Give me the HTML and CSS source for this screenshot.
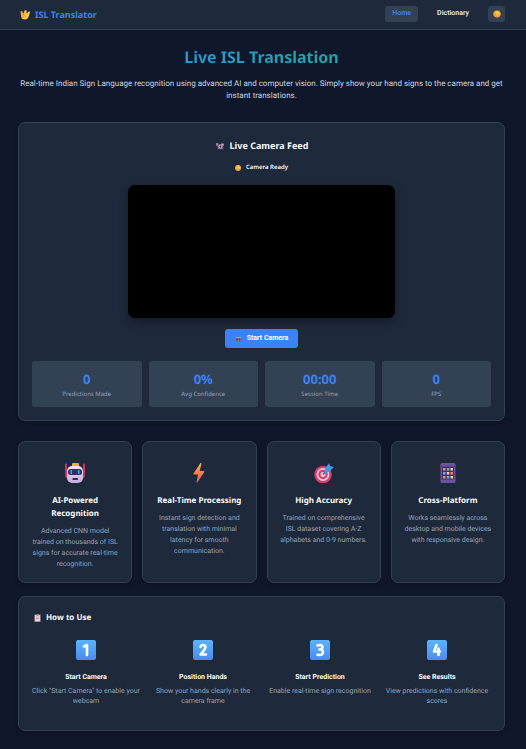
FILE: index.html
```html
<!DOCTYPE html>
<html lang="en">
<head>
<meta charset="utf-8">
<title>ISL Translator</title>
<meta name="viewport" content="width=device-width, initial-scale=1">
<link rel="stylesheet" href="styles.css">
</head>
<body>
<svg width="0" height="0" class="defs" aria-hidden="true">
  <defs>
    <linearGradient id="bolt" x1="0" y1="0" x2="0" y2="1"><stop offset="0" stop-color="#ffb13d"/><stop offset="1" stop-color="#f4505e"/></linearGradient>
    <linearGradient id="key" x1="0" y1="0" x2="0" y2="1"><stop offset="0" stop-color="#5cb3fd"/><stop offset="1" stop-color="#4a8cf0"/></linearGradient>
    <linearGradient id="face" x1="0" y1="0" x2="0" y2="1"><stop offset="0" stop-color="#eee6f5"/><stop offset="1" stop-color="#c3aedb"/></linearGradient>
    <radialGradient id="sun" cx=".6" cy=".35" r=".7"><stop offset="0" stop-color="#ffd34f"/><stop offset="1" stop-color="#e9912c"/></radialGradient>
    <linearGradient id="hand" x1="0" y1="0" x2="1" y2="0"><stop offset="0" stop-color="#f79a35"/><stop offset=".6" stop-color="#ffcb45"/></linearGradient>
  </defs>
</svg>
<header class="topbar">
  <a class="brand" href="#">
    <svg class="brand-icon" viewBox="0 0 20 20" aria-hidden="true"><path fill="url(#hand)" d="M1 4q1-3 4-1l1 4 2-1 1-5q2-2 4 0v5l1 1 3-4q2-1 3 1l-2 7q-2 8-8 8-8 0-8-7z"/><path d="M4 9q5 0 7 3" fill="none" stroke="#d97a25"/></svg>
    ISL Translator
  </a>
  <nav class="nav">
    <a class="nav-link active" href="#">Home</a>
    <a class="nav-link" href="#">Dictionary</a>
    <button class="theme" type="button" aria-label="Toggle theme"><svg viewBox="0 0 20 20" aria-hidden="true"><path fill="#dc8730" d="m10 0 2.500 2.500L16 1.500l1 3.500 3 2-1 3 1 3-3 2-1 3.500-3.500-1L10 20l-2.500-2.500-3.500 1L3 15l-3-2 1-3-1-3 3-2 1-3.500 3.500 1z"/><circle cx="10" cy="10" r="8" fill="url(#sun)"/></svg></button>
  </nav>
</header>
<main class="page">
  <section class="hero">
    <h1>Live ISL Translation</h1>
    <p>Real-time Indian Sign Language recognition using advanced AI and computer vision. Simply show your hand signs to the camera and get instant translations.</p>
  </section>

  <section class="panel camera">
    <h2><svg class="camera-icon" viewBox="0 0 20 20" aria-hidden="true"><path fill="#7d6b85" d="M0 3h6v3h7V3h7v6l-2 1v8H4v-7L0 9z"/><circle cx="11" cy="11" r="5" fill="#b6a3b9"/><circle cx="11" cy="11" r="2.500" fill="#4a4054"/><path fill="#c2b1c4" d="M14 5h5v3h-5zM1 4h4v2H1z"/></svg>Live Camera Feed</h2>
    <p class="status"><svg viewBox="0 0 20 20" aria-hidden="true"><circle cx="10" cy="10" r="10" fill="url(#sun)"/></svg>Camera Ready</p>
    <div class="video"></div>
    <button class="start" type="button"><svg viewBox="0 0 20 20" aria-hidden="true"><path fill="#7d7180" d="M0 3h20v12h-3v3H4v-3H0z"/><path fill="#b7a9b4" d="M1 4h18v3H1z"/><path fill="#453b4c" d="M3 9h5v5H3zm8 0h5v5h-5z"/></svg>Start Camera</button>
    <div class="stats">
      <div class="stat"><strong>0</strong><span>Predictions Made</span></div>
      <div class="stat"><strong>0%</strong><span>Avg Confidence</span></div>
      <div class="stat"><strong>00:00</strong><span>Session Time</span></div>
      <div class="stat"><strong>0</strong><span>FPS</span></div>
    </div>
  </section>

  <section class="features">
    <article class="panel feature">
      <svg class="icon" viewBox="0 0 20 20" aria-hidden="true"><path fill="#c9375f" d="M0 1.500a1 1 0 0 1 2 0V8h1v7H1q-1-1-1-3zM20 1.500a1 1 0 0 0-2 0V8h-1v7h2q1-1 1-3z"/><rect x="7" y="0" width="7" height="4" rx="1" fill="#f8a928"/><rect x="2" y="3" width="16" height="17" rx="5" fill="url(#face)"/><rect x="3" y="6" width="14" height="6" rx="2.500" fill="#382d68"/><path fill="#34a8f5" d="M5.500 7h1.500v4H5.500zM13 7h1.500v4H13z"/><rect x="7.500" y="15" width="5.500" height="2" rx=".5" fill="#3b2b50"/></svg>
      <h3>AI-Powered Recognition</h3>
      <p>Advanced CNN model trained on thousands of ISL signs for accurate real-time recognition.</p>
    </article>
    <article class="panel feature">
      <svg class="icon" viewBox="0 0 20 20" aria-hidden="true"><path fill="url(#bolt)" d="M11.500 0 4.500 10.500q-.5 1 .5 1h4L7.500 19q.3 1 1 .3L15.300 9q.3-1-.6-1h-4L12.500.5q-.3-1-1-.5z"/></svg>
      <h3>Real-Time Processing</h3>
      <p>Instant sign detection and translation with minimal latency for smooth communication.</p>
    </article>
    <article class="panel feature">
      <svg class="icon" viewBox="0 0 20 20" aria-hidden="true"><circle cx="9" cy="11.500" r="8.800" fill="#d53e6b"/><circle cx="9" cy="11.500" r="6.500" fill="#f3c5d9"/><circle cx="9" cy="11.500" r="4.700" fill="#d53e6b"/><circle cx="9" cy="11.500" r="2.500" fill="#f3c5d9"/><path d="m9 11.500 6-6" stroke="#226fb5" stroke-width="1.500"/><path fill="#3b9cec" d="m10.500 9 1-4L15 0l1 3 4 1-4 4-4 2.500z"/></svg>
      <h3>High Accuracy</h3>
      <p>Trained on comprehensive ISL dataset covering A-Z alphabets and 0-9 numbers.</p>
    </article>
    <article class="panel feature">
      <svg class="icon" viewBox="0 0 20 20" aria-hidden="true"><rect x="2.500" width="15" height="20" rx="1.500" fill="#6a529e"/><path fill="#3e3268" d="M4 3.500h12v13H4z"/><path fill="#ff826e" d="M5 5h2.500v2.500H5zM12.500 9h2.500v2.500h-2.500zM5 13h2.500v2.500H5z"/><path fill="#5aaef5" d="M8.800 5h2.500v2.500H8.800zM5 9h2.500v2.500H5zM8.800 13h2.500v2.500H8.800z"/><path fill="#ffd66b" d="M12.500 5h2.500v2.500h-2.500zM8.800 9h2.500v2.500H8.800zM12.500 13h2.500v2.500h-2.500z"/></svg>
      <h3>Cross-Platform</h3>
      <p>Works seamlessly across desktop and mobile devices with responsive design.</p>
    </article>
  </section>

  <section class="panel guide">
    <h2><svg class="note-icon" viewBox="0 0 16 20" aria-hidden="true"><rect y="1" width="16" height="19" rx="1" fill="#a87a88"/><path fill="#e6dcea" d="M2 3h12v15H2z"/><path fill="#8a7c94" d="M5 0h6v4H5zM4 7h8v1H4zm0 3h8v1H4zm0 3h6v1H4z"/></svg>How to Use</h2>
    <div class="steps">
      <div class="step"><svg class="icon" viewBox="0 0 20 20" aria-hidden="true"><rect width="20" height="20" rx="2" fill="url(#key)"/><path class="digit" d="m8 6.500 3-1.500v10"/></svg><h4>Start Camera</h4><p>Click "Start Camera" to enable your webcam</p></div>
      <div class="step"><svg class="icon" viewBox="0 0 20 20" aria-hidden="true"><rect width="20" height="20" rx="2" fill="url(#key)"/><path class="digit" d="M7.500 7q.5-2 2.500-2t2.500 2.300Q12.500 9 7.500 14.500H13"/></svg><h4>Position Hands</h4><p>Show your hands clearly in the camera frame</p></div>
      <div class="step"><svg class="icon" viewBox="0 0 20 20" aria-hidden="true"><rect width="20" height="20" rx="2" fill="url(#key)"/><path class="digit" d="M7.500 5.500Q12.500 4 12.500 7.300 12 9.500 9.500 9.500q3.500 0 3.500 2.500 0 4-5.500 2.700"/></svg><h4>Start Prediction</h4><p>Enable real-time sign recognition</p></div>
      <div class="step"><svg class="icon" viewBox="0 0 20 20" aria-hidden="true"><rect width="20" height="20" rx="2" fill="url(#key)"/><path class="digit" d="M9.500 5 7 11.500h6M11.500 8.500V15"/></svg><h4>See Results</h4><p>View predictions with confidence scores</p></div>
    </div>
  </section>
</main>
</body>
</html>
```
FILE: styles.css
```css
* { box-sizing: border-box; margin: 0; padding: 0; }
body {
  background: #0f172a;
  color: #f8fafc;
  font-family: Roboto, "Noto Sans", sans-serif;
  font-size: 7px;
  line-height: 11px;
  text-rendering: geometricPrecision;
}
svg { display: block; flex: none; }
.defs { position: absolute; }
a { color: inherit; text-decoration: none; }
button { border: 0; font: inherit; color: inherit; cursor: pointer; }

.topbar {
  display: flex;
  justify-content: space-between;
  align-items: center;
  height: 30px;
  padding: 0 21px 2px 20px;
  background: #1e293b;
  border-bottom: 1px solid #334155;
}
.brand, h1, h2, h3, .stat, .status { font-family: "Noto Sans", sans-serif; }
.brand { display: flex; align-items: center; gap: 5px; padding-top: 2px; color: #3b82f6; font-size: 9px; font-weight: 700; line-height: 12px; }
.brand-icon { width: 10px; height: 10px; }
.nav { display: flex; align-items: center; gap: 12px; }
.nav-link { padding: 2px 7px 3px; border-radius: 3px; font-weight: 600; color: #e2e8f0; }
.nav-link.active { background: #334155; color: #3b82f6; }
.theme { display: grid; place-items: center; width: 17px; height: 16px; border-radius: 3px; background: #334155; }
.theme svg { width: 8px; height: 8px; }

.page { padding: 15px 21px 18px 18px; }
.hero { text-align: center; margin-bottom: 20px; }
h1 {
  margin-bottom: 9px;
  font-size: 16px;
  font-weight: 700;
  line-height: 24px;
  background: linear-gradient(135deg, #3b82f6, #10b981);
  background-clip: text;
  -webkit-background-clip: text;
  color: transparent;
}
.hero p { font-size: 8px; line-height: 12px; color: #cbd5e1; }

.panel { background: #1e293b; border: 1px solid #334155; border-radius: 7px; box-shadow: 0 2px 4px #0003; }
.camera { display: flex; flex-direction: column; align-items: center; padding: 15px 13px 13px; margin-bottom: 20px; }
h2 { display: flex; align-items: center; gap: 5px; font-weight: 700; }
.camera h2 { font-size: 9px; line-height: 16px; margin-bottom: 8px; }
.camera-icon { width: 10px; height: 8px; }
.status { display: flex; align-items: center; gap: 5px; margin-bottom: 12px; font-size: 6px; font-weight: 600; }
.status svg { width: 6px; height: 6px; }
.video { width: 58%; aspect-ratio: 2; background: #000; border-radius: 7px; box-shadow: 0 4px 10px #0005; }
.start { display: flex; align-items: center; gap: 5px; height: 19px; margin: 11px 0 13px; padding: 0 10px; border-radius: 3px; background: #3b82f6; color: #fff; font-weight: 700; }
.start svg { width: 7px; height: 6px; }
.stats { align-self: stretch; display: grid; grid-template-columns: repeat(4, 1fr); gap: 7px; }
.stat { display: flex; flex-direction: column; align-items: center; height: 46px; padding-top: 8px; background: #334155; border-radius: 3px; }
.stat strong { color: #3b82f6; font-size: 13px; font-weight: 700; line-height: 20px; }
.stat span { color: #94a3b8; font-size: 6px; }

.features { display: grid; grid-template-columns: repeat(4, 1fr); gap: 10px; margin-bottom: 13px; }
.feature { padding: 21px 12px 12px; text-align: center; }
.icon { width: 20px; height: 20px; margin: 0 auto 11px; }
h3 { margin-bottom: 6px; font-size: 8px; font-weight: 700; line-height: 13px; }
.feature p, .step p { color: #94a3b8; }
.feature p { line-height: 11px; }

.guide { padding: 15px 11px 24px; }
.guide h2 { margin-bottom: 17px; padding-left: 4px; font-size: 8px; }
.note-icon { width: 7px; height: 8px; }
.steps { display: grid; grid-template-columns: repeat(4, 1fr); gap: 5px; text-align: center; }
h4 { margin-bottom: 2px; font-size: 7px; font-weight: 700; line-height: 13px; }
.step p { line-height: 10px; }
.digit { fill: none; stroke: #fff; stroke-width: 2.6px; stroke-linecap: round; stroke-linejoin: round; }
```
